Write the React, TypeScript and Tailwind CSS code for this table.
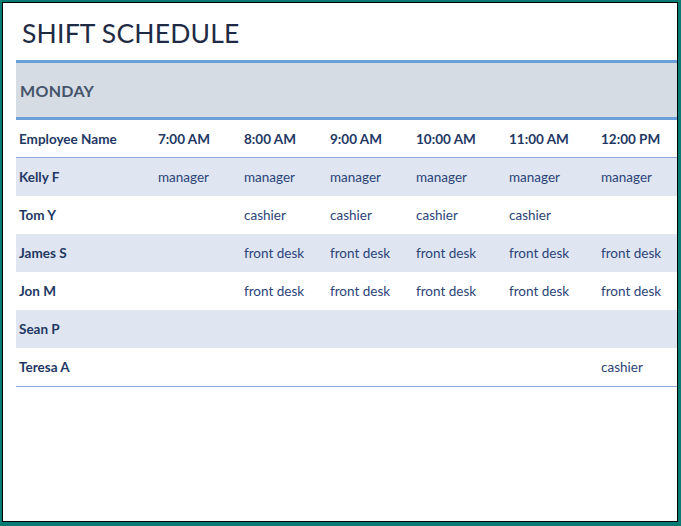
import React from "react";

const times = ["7:00 AM", "8:00 AM", "9:00 AM", "10:00 AM", "11:00 AM", "12:00 PM"];

const rows: { name: string; slots: string[] }[] = [
  { name: "Kelly F", slots: ["manager", "manager", "manager", "manager", "manager", "manager"] },
  { name: "Tom Y", slots: ["", "cashier", "cashier", "cashier", "cashier", ""] },
  { name: "James S", slots: ["", "front desk", "front desk", "front desk", "front desk", "front desk"] },
  { name: "Jon M", slots: ["", "front desk", "front desk", "front desk", "front desk", "front desk"] },
  { name: "Sean P", slots: ["", "", "", "", "", ""] },
  { name: "Teresa A", slots: ["", "", "", "", "", "cashier"] },
];

const cols = "grid grid-cols-[142px_86px_86px_86px_93px_92px_1fr]";

export default function App() {
  return (
    <div
      className="w-[681px] h-[526px] bg-[#0b7a74] pl-[2px] pt-[2px] pr-[3px] pb-[4px] flex"
      style={{ fontFamily: "Lato, 'Open Sans', sans-serif" }}
    >
      <div className="flex-1 border border-black bg-white overflow-hidden">
        {/* Title */}
        <div className="h-[57px] pl-[19px] pt-[14px]">
          <h1 className="text-[26.5px] leading-[32px] text-[#1f2a44] tracking-[0.2px]">SHIFT SCHEDULE</h1>
        </div>

        <div className="ml-[13px]">
          {/* Day band */}
          <div className="h-[60px] bg-[#d6dce4] border-y-[3px] border-[#6b9fd8] flex items-center pl-[4px] pt-[1px]">
            <span className="text-[16px] font-bold text-[#44546a] tracking-[0.3px]">MONDAY</span>
          </div>

          {/* Header row */}
          <div className={`${cols} h-[38px] items-center pt-[2px] border-b border-[#8eaadb] text-[13.5px] font-bold text-[#1f3864]`}>
            <div className="pl-[3px]">Employee Name</div>
            {times.map((t) => (
              <div key={t}>{t}</div>
            ))}
          </div>

          {/* Employee rows */}
          {rows.map((r, i) => (
            <div
              key={r.name}
              className={`${cols} h-[38px] items-center text-[13.5px] ${i % 2 === 0 ? "bg-[#dfe5f1]" : "bg-white"}`}
            >
              <div className="pl-[3px] font-bold text-[#1f3864]">{r.name}</div>
              {r.slots.map((s, j) => (
                <div key={j} className="text-[#2b4478]">
                  {s}
                </div>
              ))}
            </div>
          ))}
          <div className="border-t border-[#8eaadb]" />
        </div>
      </div>
    </div>
  );
}
